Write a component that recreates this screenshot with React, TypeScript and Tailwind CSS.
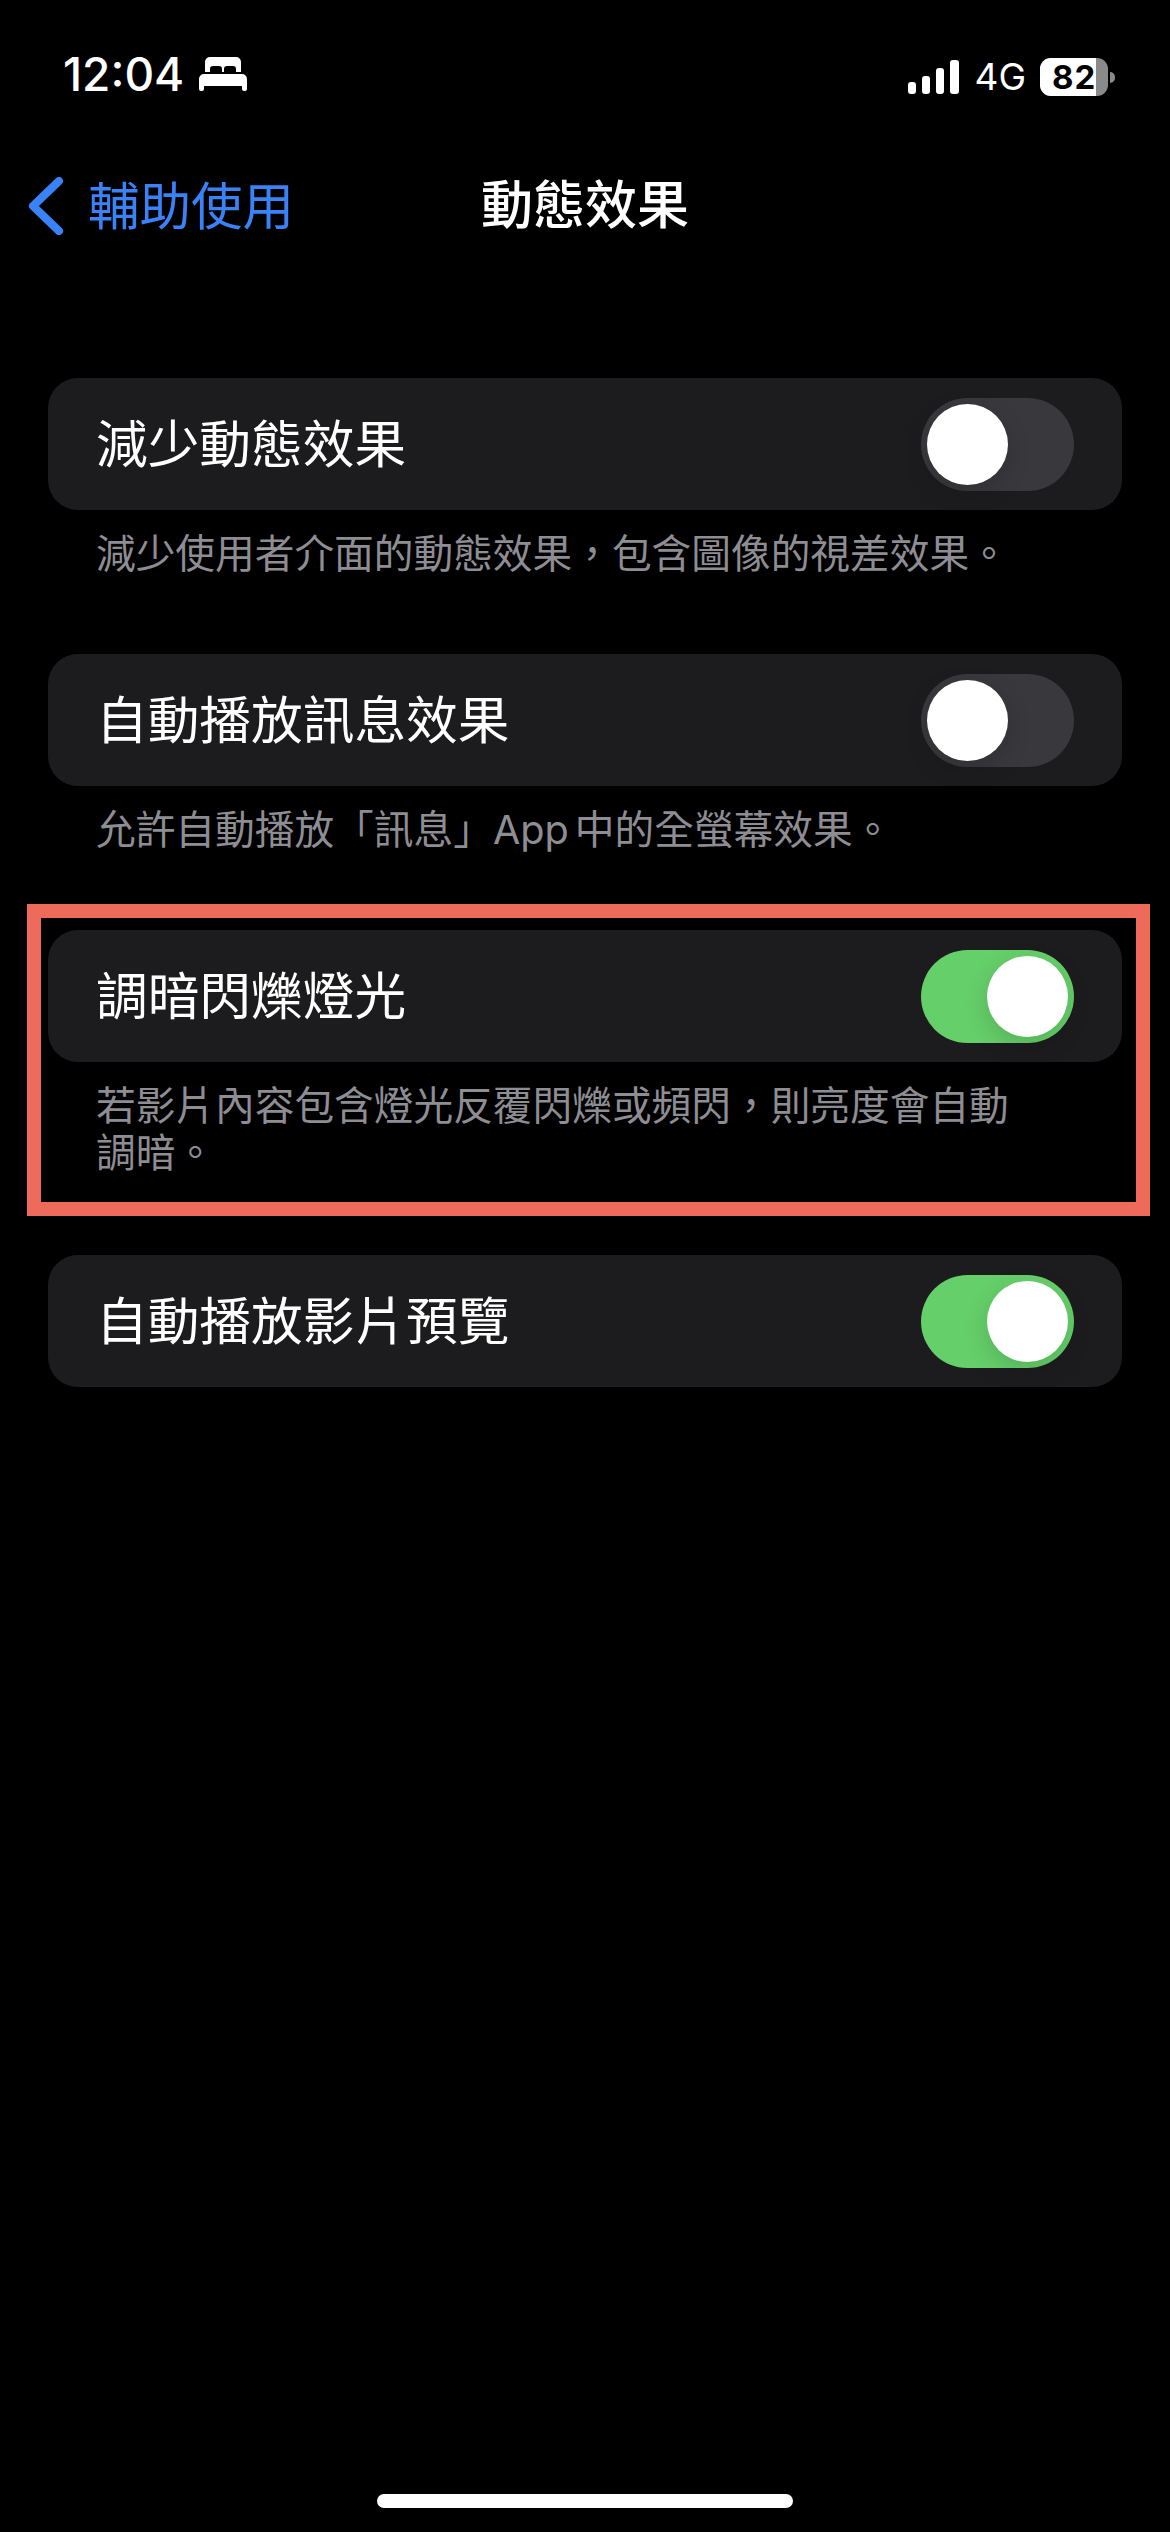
import type { ReactNode } from "react";

const FONT = "font-['Inter','Noto_Sans_CJK_TC',sans-serif]";

function Toggle({ on }: { on: boolean }) {
  return (
    <div
      className={`flex h-[93px] w-[153px] shrink-0 items-center rounded-full px-[6px] ${
        on ? "justify-end bg-[#65cf69]" : "justify-start bg-[#39393d]"
      }`}
    >
      <div className="h-[81px] w-[81px] rounded-full bg-white shadow-[0_8px_24px_rgba(0,0,0,0.15)]" />
    </div>
  );
}

function Row({ label, on }: { label: string; on: boolean }) {
  return (
    <div className="flex h-[132px] items-center justify-between rounded-[30px] bg-[#1c1c1e] pl-[48px] pr-[48px]">
      <span className="text-[51.7px] leading-[60px] text-white">{label}</span>
      <Toggle on={on} />
    </div>
  );
}

function Note({ children }: { children: ReactNode }) {
  return (
    <p className="mt-[21px] pl-[48px] text-[39.7px] leading-[47px] text-[#8d8d93]">
      {children}
    </p>
  );
}

function StatusBar() {
  return (
    <div className="flex h-[100px] items-end justify-between pb-[4px] pl-[63px] pr-[55px]">
      <div className="flex items-center gap-[15px]">
        <span className="text-[46px] font-medium leading-[44px] text-white">12:04</span>
        <svg width="48" height="34" viewBox="0 0 48 34" fill="white">
          <path d="M6 15V5a5 5 0 0 1 5-5h26a5 5 0 0 1 5 5v10h-5v-3a3 3 0 0 0-3-3h-6a3 3 0 0 0-3 3v3h-2v-3a3 3 0 0 0-3-3h-6a3 3 0 0 0-3 3v3z" />
          <path d="M5 17h38a5 5 0 0 1 5 5v10a2 2 0 0 1-2 2h-1a2 2 0 0 1-2-2v-3H5v3a2 2 0 0 1-2 2H2a2 2 0 0 1-2-2V22a5 5 0 0 1 5-5z" />
        </svg>
      </div>
      <div className="flex items-center">
        <div className="flex items-end gap-[6px]">
          <div className="h-[12px] w-[8px] rounded-[3px] bg-white" />
          <div className="h-[18px] w-[8px] rounded-[3px] bg-white" />
          <div className="h-[26px] w-[8px] rounded-[3px] bg-white" />
          <div className="h-[34px] w-[9px] rounded-[3px] bg-white" />
        </div>
        <span className="ml-[15px] text-[37px] leading-[38px] text-white">4G</span>
        <div className="relative ml-[14px] flex h-[38px] w-[68px] overflow-hidden rounded-[11px] bg-[#8a8a8a]">
          <div className="w-[56px] bg-white" />
          <span className="absolute inset-0 pl-[12px] text-[33px] font-bold leading-[38px] tracking-[1px] text-black">
            82
          </span>
        </div>
        <div className="ml-[2px] h-[11px] w-[5px] rounded-r-full bg-[#8a8a8a]" />
      </div>
    </div>
  );
}

function NavBar() {
  return (
    <div className="mt-[76px] grid h-[60px] grid-cols-[1fr_auto_1fr] items-center">
      <div className="flex items-center gap-[23px] pl-[28px]">
        <svg width="37" height="58" viewBox="0 0 37 58" fill="none" className="shrink-0">
          <path d="M31 4 L5 29 L31 54" stroke="#3a82f7" strokeWidth="8" strokeLinecap="round" strokeLinejoin="round" />
        </svg>
        <span className="text-[51.5px] leading-[60px] text-[#3a82f7]">輔助使用</span>
      </div>
      <span className="text-[52px] font-medium leading-[60px] text-white">動態效果</span>
      <div />
    </div>
  );
}

export default function App() {
  return (
    <div className={`flex h-[2532px] flex-col bg-black ${FONT}`}>
      <StatusBar />
      <NavBar />

      <div className="flex flex-col px-[48px] pt-[142px]">
        <Row label="減少動態效果" on={false} />
        <Note>減少使用者介面的動態效果，包含圖像的視差效果。</Note>

        <div className="mt-[76px]">
          <Row label="自動播放訊息效果" on={false} />
          <Note>
            允許自動播放「訊息」<span className="mr-[6px]">App</span>中的全螢幕效果。
          </Note>
        </div>

        {/* Highlighted section */}
        <div className="ml-[-21px] mr-[-28px] mt-[50px] border-[14px] border-[#ee6a5b] pb-[25px] pl-[7px] pr-[14px] pt-[12px]">
          <Row label="調暗閃爍燈光" on />
          <Note>
            若影片內容包含燈光反覆閃爍或頻閃，則亮度會自動
            <br />
            調暗。
          </Note>
        </div>

        <div className="mt-[39px]">
          <Row label="自動播放影片預覽" on />
        </div>
      </div>

      {/* Home indicator */}
      <div className="mb-[24px] mt-auto flex justify-center">
        <div className="h-[14px] w-[416px] rounded-full bg-white" />
      </div>
    </div>
  );
}
